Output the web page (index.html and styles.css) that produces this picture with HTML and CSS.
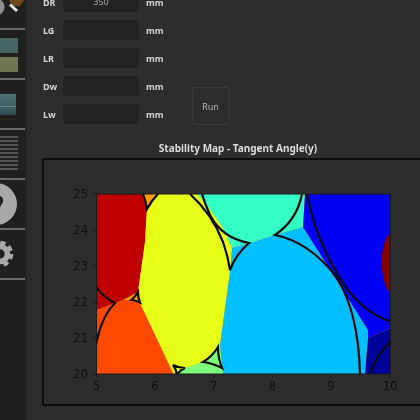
FILE: index.html
```html
<!DOCTYPE html>
<html lang="en">
<head>
    <meta charset="UTF-8">
    <meta name="viewport" content="width=device-width, initial-scale=1.0">
    <title>Stability Map</title>
    <link rel="stylesheet" href="styles.css">
</head>
<body>
    <div class="app">
        <div class="sidebar">
            <div class="side-btn first">
                <svg width="25" height="28" viewBox="0 0 25 28">
                    <circle cx="-4" cy="7" r="8.500" fill="#8f8f8f"/>
                    <path d="M9 0H24L20 6H13Z" fill="#6d4a1c"/>
                    <path d="M10 4.500L17 11" stroke="#e8e8e8" stroke-width="3"/>
                </svg>
            </div>
            <div class="side-btn">
                <div class="swatch teal"></div>
                <div class="swatch olive"></div>
            </div>
            <div class="side-btn">
                <div class="wave"></div>
            </div>
            <div class="side-btn">
                <div class="lines">
                    <span></span><span></span><span></span><span></span><span></span>
                    <span></span><span></span><span></span><span></span>
                </div>
            </div>
            <div class="side-btn">
                <svg width="25" height="48" viewBox="0 0 25 48">
                    <circle cx="-4" cy="24" r="21" fill="#a8a8a8"/>
                    <path d="M0 16C3 17 4 20 2.500 23C1.500 25 0 26 0 28Z" fill="#222"/>
                </svg>
            </div>
            <div class="side-btn">
                <svg width="25" height="48" viewBox="0 0 25 48">
                    <circle cx="0" cy="24" r="7.500" fill="none" stroke="#a8a8a8" stroke-width="5.500"/>
                    <circle cx="0" cy="24" r="11" fill="none" stroke="#a8a8a8" stroke-width="4.500" stroke-dasharray="5 3.640"/>
                </svg>
            </div>
        </div>

        <div class="main">
            <div class="top">
                <div class="fields">
                    <div class="row"><label>DR</label><div class="field">350</div><span class="unit">mm</span></div>
                    <div class="row"><label>LG</label><div class="field"></div><span class="unit">mm</span></div>
                    <div class="row"><label>LR</label><div class="field"></div><span class="unit">mm</span></div>
                    <div class="row"><label>Dw</label><div class="field"></div><span class="unit">mm</span></div>
                    <div class="row"><label>Lw</label><div class="field"></div><span class="unit">mm</span></div>
                </div>
                <button class="run">Run</button>
            </div>
            <div class="map-title">Stability Map - Tangent Angle(y)</div>
            <div class="map-frame">
                <svg class="plot" width="378" height="244" viewBox="44 160 378 244">
                    <defs><clipPath id="axes"><rect x="97" y="194" width="293.500" height="180"/></clipPath></defs>
                    <g clip-path="url(#axes)">
                        <rect x="97" y="194" width="294" height="180" fill="#ffa000"/>
                        <path d="M97 194H143L147 209L145 242L138 292L123 300L97 310Z" fill="#c00000"/>
                        <path d="M97 310L115 303L123 300L132 300L140 303L173 374H97Z" fill="#ff4800"/>
                        <path d="M158 194H197L207 205L223 228L232 248L230 272L220 345L203 362L185 368L174 374L140 303L138 292L145 242L147 209Z" fill="#e6ff17"/>
                        <path d="M174 374L185 368L203 362L220 345L223 374Z" fill="#7dff7a"/>
                        <path d="M197 194H305L303 227L275 235L250 243L232 248L223 228L207 205Z" fill="#33ffc4"/>
                        <path d="M232 248L250 243L275 235L303 227L368 330V338L365 374H223L220 345L230 272Z" fill="#00bfff"/>
                        <path d="M305 194H391V328L368 338V330L303 227Z" fill="#0000f5"/>
                        <path d="M368 338L391 328V374H365Z" fill="#00009a"/>
                        <path d="M391 232Q382 240 381.500 262Q382 284 391 295Z" fill="#800000"/>
                        <g class="curves">
                            <path d="M96 287Q104 298 115 303Q101 317 96 345"/>
                            <path d="M143 194Q146 202 147 209Q152 200 158 194"/>
                            <path d="M131.500 300Q135 297 138 292Q138 298 140 302.500Q135 300 131.500 300Z"/>
                            <path d="M190 194Q212 214 223 242Q228 256 230 270Q236 254 249 243Q222 238 210 215Q205 204 202 194"/>
                            <path d="M203 362Q212 357 218 347Q218 358 222 368Q212 363 203 362Z"/>
                            <path d="M173 365Q179 368 185 368Q180 370 177 375Q176 369 173 365Z"/>
                            <path d="M302 194Q297 220 275 235Q310 242 337 278Q359 314 360 376"/>
                            <path d="M307 194Q316 240 340 278Q360 312 392 322"/>
                            <path d="M369 376Q376 355 392 340"/>
                        </g>
                    </g>
                    <rect class="spine" x="96.500" y="194" width="294" height="180"/>
                    <g class="ticks">
                        <path d="M96.500 374v4M155 374v4M214 374v4M272.500 374v4M331 374v4M390 374v4"/>
                        <path d="M96.500 374h-4M96.500 338h-4M96.500 302h-4M96.500 266h-4M96.500 230h-4M96.500 194h-4"/>
                    </g>
                    <g class="tick-x">
                        <text x="96.500" y="390">5</text>
                        <text x="155" y="390">6</text>
                        <text x="214" y="390">7</text>
                        <text x="272.500" y="390">8</text>
                        <text x="331" y="390">9</text>
                        <text x="390" y="390">10</text>
                    </g>
                    <g class="tick-y">
                        <text x="88" y="378">20</text>
                        <text x="88" y="342">21</text>
                        <text x="88" y="306">22</text>
                        <text x="88" y="270">23</text>
                        <text x="88" y="234">24</text>
                        <text x="88" y="198">25</text>
                    </g>
                </svg>
            </div>
        </div>
    </div>
</body>
</html>
```

FILE: styles.css
```css
html, body {
    margin: 0;
    height: 100%;
    overflow: hidden;
    background-color: #2d2d2d;
}
.app {
    display: flex;
    height: 420px;
    font-family: "Noto Sans", sans-serif;
    filter: blur(0.35px);
}
.sidebar {
    width: 25px;
    flex-shrink: 0;
    background-color: #1f1f1f;
    border-right: 2px solid #272727;
}
.side-btn {
    height: 48px;
    border-bottom: 2px solid #6a6a6a;
    overflow: hidden;
}
.side-btn.first {
    height: 28px;
}
.side-btn svg {
    display: block;
}
.swatch {
    width: 18px;
    height: 15px;
}
.swatch.teal {
    margin-top: 8px;
    margin-bottom: 4px;
    background-color: #466563;
}
.swatch.olive {
    background-color: #74744f;
}
.wave {
    width: 16px;
    height: 21px;
    margin-top: 14px;
    background: linear-gradient(#4c7477 0, #3d6166 55%, #8a9a90 58%, #3d6166 62%, #2c474c 100%);
}
.lines {
    display: flex;
    flex-direction: column;
    gap: 2px;
    padding-top: 6px;
}
.lines span {
    width: 18px;
    height: 2px;
    background-color: #565656;
}
.main {
    flex: 1;
    min-width: 0;
    padding-left: 15px;
}
.top {
    display: flex;
    margin-top: -8px;
}
.fields {
    display: flex;
    flex-direction: column;
    gap: 8px;
}
.row {
    display: flex;
    align-items: center;
    height: 20px;
    padding-left: 1px;
    color: #d4d4d4;
    font-size: 9px;
    font-weight: 700;
}
.row label {
    width: 20px;
}
.field {
    width: 76px;
    height: 20px;
    line-height: 20px;
    border-radius: 3px;
    background-color: #222222;
    color: #a8a8a8;
    font-weight: 400;
    text-align: center;
}
.unit {
    margin-left: 7px;
}
.run {
    width: 38px;
    height: 38px;
    margin-left: 28px;
    margin-top: 95px;
    padding: 0;
    border: 1px solid #3b3b3b;
    border-radius: 3px;
    background-color: #2d2d2d;
    color: #b4b4b4;
    font-family: "Noto Sans", sans-serif;
    font-size: 9px;
}
.map-title {
    width: 392px;
    margin-top: 16px;
    height: 14px;
    line-height: 14px;
    color: #dcdcdc;
    font-size: 10px;
    font-weight: 700;
    text-align: center;
}
.map-frame {
    width: 392px;
    height: 244px;
    margin-top: 3px;
    border: 2px solid #0c0c0c;
}
.plot {
    display: block;
}
.curves path {
    fill: none;
    stroke: #0a0a0a;
    stroke-width: 2.200;
}
.spine {
    fill: none;
    stroke: #1a1a1a;
    stroke-width: 1;
}
.ticks path {
    stroke: #1a1a1a;
    stroke-width: 1;
}
.tick-x text, .tick-y text {
    fill: #101010;
    font-family: "DejaVu Sans", sans-serif;
    font-size: 11.500px;
}
.tick-x text {
    text-anchor: middle;
}
.tick-y text {
    text-anchor: end;
}
```
